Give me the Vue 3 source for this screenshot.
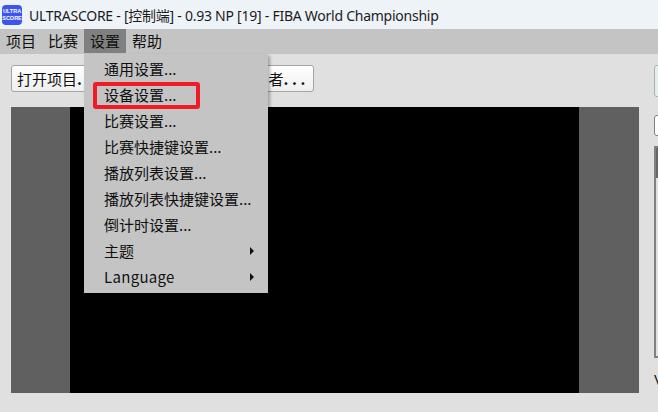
<script setup>
const menus = [
  { label: '项目' },
  { label: '比赛' },
  { label: '设置', active: true },
  { label: '帮助' }
]
const items = [
  { label: '通用设置...' },
  { label: '设备设置...', marked: true },
  { label: '比赛设置...' },
  { label: '比赛快捷键设置...' },
  { label: '播放列表设置...' },
  { label: '播放列表快捷键设置...' },
  { label: '倒计时设置...' },
  { label: '主题', sub: true },
  { label: 'Language', sub: true, latin: true }
]
</script>

<template>
  <div class="window">
    <header class="titlebar">
      <div class="logo"><span>ULTRA</span><span>SCORE</span></div>
      <div class="title">ULTRASCORE - [控制端] - 0.93 NP [19] - FIBA World Championship</div>
    </header>

    <nav class="menubar">
      <div v-for="m in menus" :key="m.label" class="menu" :class="{ active: m.active }">{{ m.label }}</div>
    </nav>

    <main class="content">
      <section class="left">
        <div class="toolbar">
          <button class="btn">打开项目<span class="dots">...</span></button>
          <button class="btn second">者<span class="dots">...</span></button>
        </div>
        <div class="preview">
          <div class="stage"></div>
        </div>
      </section>
      <aside class="right">
        <div class="big-btn"></div>
        <div class="small-box"></div>
        <div class="panel"><div class="panel-head"></div></div>
        <div class="cut-text">V</div>
      </aside>
    </main>

    <div class="dropdown">
      <div v-for="it in items" :key="it.label" class="item" :class="{ latin: it.latin }">
        <span>{{ it.label }}</span>
        <span v-if="it.sub" class="arrow"></span>
        <span v-if="it.marked" class="mark"></span>
      </div>
    </div>
  </div>
</template>

<style>
html, body { margin: 0; padding: 0; overflow: hidden; }
</style>

<style scoped>
.window {
  position: relative;
  width: 658px;
  height: 412px;
  overflow: hidden;
  display: flex;
  flex-direction: column;
  background: #e0e0e0;
  font-family: "Liberation Sans", "Noto Sans CJK SC", sans-serif;
  color: #111;
}
.titlebar {
  height: 29px;
  flex: none;
  display: flex;
  align-items: center;
  gap: 7px;
  padding-left: 2px;
  background: #eef3f8;
}
.logo {
  width: 20px;
  height: 20px;
  border-radius: 4px;
  background: #3a55f0;
  color: #fff;
  font-size: 5.5px;
  line-height: 6.5px;
  font-weight: 700;
  display: flex;
  flex-direction: column;
  align-items: center;
  justify-content: center;
}
.title {
  font-family: "Noto Sans", "Noto Sans CJK SC", sans-serif;
  font-size: 14px;
  letter-spacing: -0.25px;
  white-space: nowrap;
  color: #1c1c1c;
}
.menubar {
  height: 25px;
  flex: none;
  display: flex;
  background: #c4c4c4;
  font-size: 15px;
  font-family: "Noto Sans CJK SC", sans-serif;
}
.menu {
  width: 42px;
  height: 24px;
  line-height: 24px;
  text-align: center;
}
.menu.active { background: #808080; }
.content {
  flex: 1;
  display: flex;
  padding: 11px 0 0 11px;
}
.left {
  width: 628px;
  flex: none;
  display: flex;
  flex-direction: column;
}
.toolbar {
  height: 27px;
  display: flex;
  justify-content: space-between;
  width: 303px;
}
.btn {
  height: 27px;
  box-sizing: border-box;
  border: 1px solid #a4a4a4;
  border-radius: 3px;
  background: linear-gradient(#ffffff, #efefef);
  font-family: "Noto Sans CJK SC", sans-serif;
  font-size: 15px;
  line-height: 25px;
  color: #111;
  padding: 0 5px;
  width: 150px;
  text-align: left;
  white-space: nowrap;
}
.btn.second {
  text-align: right;
  padding-right: 4px;
}
.dots {
  letter-spacing: 3.6px;
  font-weight: 700;
}
.preview {
  margin-top: 15px;
  height: 286px;
  background: #606060;
  padding: 0 60px 0 59px;
  box-sizing: border-box;
}
.stage { height: 100%; background: #000; }
.right {
  margin-left: 15px;
  width: 60px;
  flex: none;
  display: flex;
  flex-direction: column;
}
.big-btn {
  height: 32px;
  box-sizing: border-box;
  border: 1px solid #a8b0b0;
  border-radius: 3px;
  background: #e4eeee;
}
.small-box {
  margin-top: 18px;
  height: 21px;
  box-sizing: border-box;
  border: 1px solid #808080;
  border-radius: 3px;
  background: #fff;
}
.panel {
  margin-top: 10px;
  height: 212px;
  box-sizing: border-box;
  border: 2px solid #808080;
  border-right: 0;
  background: #e0e0e0;
}
.panel-head {
  height: 30px;
  background: #666;
}
.cut-text {
  margin-top: 14px;
  font-size: 14px;
  line-height: 16px;
}
.dropdown {
  position: absolute;
  left: 84px;
  top: 54px;
  width: 184px;
  height: 239px;
  box-sizing: border-box;
  padding-top: 2px;
  background: #c4c4c4;
  box-shadow: 2px 2px 3px rgba(0, 0, 0, 0.3);
  font-family: "Noto Sans CJK SC", sans-serif;
  font-size: 15px;
}
.item {
  position: relative;
  height: 26px;
  line-height: 26px;
  padding-left: 20px;
  white-space: nowrap;
}
.item.latin { letter-spacing: 0.3px; }
.arrow {
  position: absolute;
  right: 14px;
  top: 9px;
  border-left: 4px solid #111;
  border-top: 4px solid transparent;
  border-bottom: 4px solid transparent;
}
.mark {
  position: absolute;
  left: 9px;
  top: 0;
  width: 107px;
  height: 27px;
  box-sizing: border-box;
  border: 4px solid #ee1c25;
  border-radius: 3px;
}
</style>
